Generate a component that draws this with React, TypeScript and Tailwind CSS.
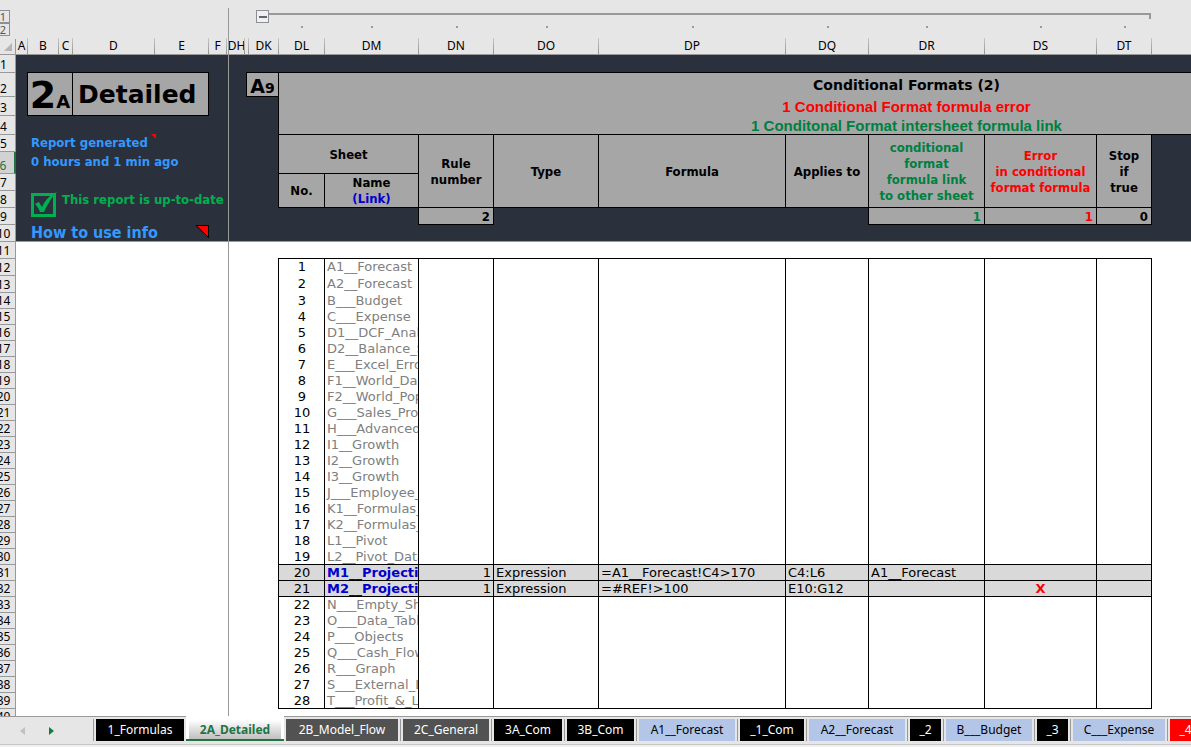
import clsx from 'clsx';

type Column = { label: string; width: string; dot?: boolean };
type SheetRow = {
  no: number;
  name: string;
  rule?: string;
  type?: string;
  formula?: string;
  appliesTo?: string;
  link?: string;
  error?: string;
};

const leftColumns: Column[] = [
  { label: 'A', width: 'w-[12px]' },
  { label: 'B', width: 'w-[31px]' },
  { label: 'C', width: 'w-[14px]' },
  { label: 'D', width: 'w-[82px]' },
  { label: 'E', width: 'w-[54px]' },
  { label: 'F', width: 'w-[18px]' },
];

const rightColumns: Column[] = [
  { label: 'DH', width: 'w-[16px]' },
  { label: '', width: 'w-[4px]' },
  { label: 'DK', width: 'w-[30px]' },
  { label: 'DL', width: 'w-[46px]', dot: true },
  { label: 'DM', width: 'w-[94px]', dot: true },
  { label: 'DN', width: 'w-[75px]', dot: true },
  { label: 'DO', width: 'w-[105px]', dot: true },
  { label: 'DP', width: 'w-[187px]', dot: true },
  { label: 'DQ', width: 'w-[83px]', dot: true },
  { label: 'DR', width: 'w-[116px]', dot: true },
  { label: 'DS', width: 'w-[112px]', dot: true },
  { label: 'DT', width: 'w-[55px]', dot: true },
];

const tableWidths = [
  'w-[47px]',
  'w-[94px]',
  'w-[75px]',
  'w-[105px]',
  'w-[187px]',
  'w-[83px]',
  'w-[116px]',
  'w-[112px]',
  'w-[55px]',
];

const names = [
  'A1__Forecast',
  'A2__Forecast',
  'B___Budget',
  'C___Expense',
  'D1__DCF_Analysis',
  'D2__Balance_Sheet',
  'E___Excel_Errors',
  'F1__World_Data',
  'F2__World_Population',
  'G___Sales_Projection',
  'H___Advanced',
  'I1__Growth',
  'I2__Growth',
  'I3__Growth',
  'J___Employee_List',
  'K1__Formulas_1',
  'K2__Formulas_2',
  'L1__Pivot',
  'L2__Pivot_Data',
  'M1__Projection',
  'M2__Projection',
  'N___Empty_Sheet',
  'O___Data_Table',
  'P___Objects',
  'Q___Cash_Flow',
  'R___Graph',
  'S___External_Links',
  'T___Profit_&_Loss',
];

const findings: Record<number, Partial<SheetRow>> = {
  20: { rule: '1', type: 'Expression', formula: '=A1__Forecast!C4>170', appliesTo: 'C4:L6', link: 'A1__Forecast' },
  21: { rule: '1', type: 'Expression', formula: '=#REF!>100', appliesTo: 'E10:G12', error: 'X' },
};

const rows: SheetRow[] = names.map((name, i) => ({ no: i + 1, name, ...findings[i + 1] }));

const tallRows: Record<number, string> = {
  1: 'h-[18px]',
  2: 'h-[24px]',
  3: 'h-[19px]',
  4: 'h-[19px]',
  6: 'h-[22px]',
};

const tabs = [
  { label: '1_Formulas', style: 'w-[88px] bg-black text-white' },
  { label: '2A_Detailed', active: true, style: '' },
  { label: '2B_Model_Flow', style: 'w-[112px] bg-[#525252] text-white' },
  { label: '2C_General', style: 'w-[86px] bg-[#525252] text-white' },
  { label: '3A_Com', style: 'w-[68px] bg-black text-white' },
  { label: '3B_Com', style: 'w-[67px] bg-black text-white' },
  { label: 'A1__Forecast', style: 'w-[96px] bg-[#b4c6e7] text-black' },
  { label: '_1_Com', style: 'w-[64px] bg-black text-white' },
  { label: 'A2__Forecast', style: 'w-[96px] bg-[#b4c6e7] text-black' },
  { label: '_2', style: 'w-[31px] bg-black text-white' },
  { label: 'B___Budget', style: 'w-[86px] bg-[#b4c6e7] text-black' },
  { label: '_3', style: 'w-[31px] bg-black text-white' },
  { label: 'C___Expense', style: 'w-[92px] bg-[#b4c6e7] text-black' },
  { label: '_4', style: 'w-[31px] bg-[#ff0000] text-white' },
];

function ColumnLabels({ columns }: { columns: Column[] }) {
  return (
    <div className="flex h-[16px]">
      {columns.map((col, i) => (
        <div key={i} className={clsx('flex shrink-0 justify-between', col.width)}>
          <span className="flex w-0 grow items-center justify-center whitespace-nowrap">{col.label}</span>
          <span className="w-px bg-linear-to-b from-[#c8c8c8] to-[#929292]" />
        </div>
      ))}
    </div>
  );
}

function OutlineBar() {
  return (
    <div className="h-[38px]">
      <div className="flex pt-[10px] pl-[27px]">
        <button aria-label="Collapse group" className="flex size-[13px] shrink-0 items-center justify-center border border-[#8c8f98] bg-[#f0f0f0]">
          <span className="h-[2px] w-[8px] bg-[#666]" />
        </button>
        <span className="mt-[3px] h-[6px] w-[882px] shrink-0 border-t-2 border-r-2 border-[#999]" />
      </div>
      <div className="flex pt-[3px]">
        {rightColumns.map((col, i) => (
          <div key={i} className={clsx('flex shrink-0 justify-center', col.width)}>
            {col.dot && <span className="size-[2px] bg-[#999]" />}
          </div>
        ))}
      </div>
    </div>
  );
}

function RowHeader({ row }: { row: number }) {
  const height = tallRows[row] ?? (row >= 14 ? 'h-[16px]' : 'h-[17px]');
  return (
    <div
      className={clsx(
        'flex shrink-0 items-end justify-center border-b border-[#999] leading-[14px]',
        height,
        row === 6 ? 'border-r-2 border-r-[#217346] bg-[#d2d2d2] text-[#217346]' : 'border-r',
      )}
    >
      {row}
    </div>
  );
}

function RowNumbers() {
  return (
    <div className="-ml-2 flex w-[24px] shrink-0 flex-col bg-[#e6e6e6]">
      <div className="flex h-[55px] shrink-0 flex-col items-end border-b border-[#999] text-[11px] leading-[11px] text-[#555]">
        <button aria-label="Outline level 1" className="mt-[10px] mr-[6px] flex h-[13px] w-[16px] items-center justify-center border border-[#8c8f98] pl-[2px]">1</button>
        <button aria-label="Outline level 2" className="mr-[6px] flex h-[13px] w-[16px] items-center justify-center border border-[#8c8f98] pl-[2px]">2</button>
        <button aria-label="Select all" className="mt-[3px] flex h-[15px] w-full items-center justify-end border-r border-[#999] pr-[3px]">
          <svg width="8" height="8" viewBox="0 0 8 8">
            <path d="M8 0v8H0z" fill="#b4b4b4" />
          </svg>
        </button>
      </div>
      {Array.from({ length: 40 }, (_, i) => (
        <RowHeader key={i} row={i + 1} />
      ))}
    </div>
  );
}

function ReportPanel() {
  return (
    <div className="h-[187px] border-b border-[#999] bg-[#2a303c] pt-[17px] font-['DejaVu_Sans_Condensed','DejaVu_Sans',sans-serif] text-[13px] font-bold [font-stretch:semi-condensed]">
      <div className="ml-[11px] flex h-[44px] w-[182px] border border-black bg-[#a6a6a6] font-['DejaVu_Sans',sans-serif] text-black [font-stretch:normal]">
        <div className="flex w-[45px] items-baseline justify-center border-r border-black text-[38px] leading-[44px]">
          2<span className="text-[18px]">A</span>
        </div>
        <h1 className="grow pl-[5px] text-[25px] leading-[44px]">Detailed</h1>
      </div>
      <div className="mt-[18px] ml-[15px] text-[#3399ff]">
        <div className="flex gap-[3px] leading-[17px]">
          Report generated
          <svg width="5" height="5" viewBox="0 0 5 5">
            <path d="M0 0h5v5z" fill="#f00" />
          </svg>
        </div>
        <p className="h-[40px] leading-[22px]">0 hours and 1 min ago</p>
        <div className="flex h-[34px] gap-[5px] text-[#00b050]">
          <svg width="26" height="26" viewBox="0 0 26 26" className="shrink-0">
            <path d="M1.5 3.5h22v21h-22z" fill="none" stroke="#00b050" strokeWidth="3" />
            <path d="M4 13l4-2 3 5C14 9 19 4 26 1c-6 6-9 12-13 20H9C8 18 6 15 4 13z" fill="#00b050" />
          </svg>
          <span className="leading-[17px] whitespace-nowrap">This report is up-to-date</span>
        </div>
        <div className="flex w-[178px] justify-between">
          <a href="#info" className="text-[16px] leading-[15px]">How to use info</a>
          <svg width="13" height="13" viewBox="0 0 13 13">
            <path d="M0 0.5h12.5v12z" fill="#f00" stroke="#000" />
          </svg>
        </div>
      </div>
    </div>
  );
}

function Cols() {
  return (
    <colgroup>
      {tableWidths.map((width, i) => (
        <col key={i} className={width} />
      ))}
    </colgroup>
  );
}

function HeaderTable() {
  const cell = 'border-r border-b border-black bg-[#a6a6a6] pt-px';
  return (
    <table className="ml-[49px] w-[874px] table-fixed border-separate border-spacing-0 text-center font-['DejaVu_Sans_Condensed','DejaVu_Sans',sans-serif] text-[13px] leading-[16px] font-bold [font-stretch:semi-condensed]">
      <Cols />
      <thead>
        <tr className="h-[39px]">
          <th colSpan={2} className={clsx(cell, 'border-l')}>Sheet</th>
          <th rowSpan={2} className={cell}>Rule<br />number</th>
          <th rowSpan={2} className={cell}>Type</th>
          <th rowSpan={2} className={cell}>Formula</th>
          <th rowSpan={2} className={cell}>Applies to</th>
          <th rowSpan={2} className={clsx(cell, 'text-[#008040]')}>conditional<br />format<br />formula link<br />to other sheet</th>
          <th rowSpan={2} className={clsx(cell, 'text-[#ff0000]')}>Error<br />in conditional<br />format formula</th>
          <th rowSpan={2} className={cell}>Stop<br />if<br />true</th>
        </tr>
        <tr className="h-[34px]">
          <th className={clsx(cell, 'border-l')}>No.</th>
          <th className={cell}>Name<br /><a href="#link" className="text-[#0000cc]">(Link)</a></th>
        </tr>
        <tr className="h-[17px] text-right leading-[15px]">
          <td />
          <td className="border-r border-black" />
          <td className={clsx(cell, 'pr-[3px]')}>2</td>
          <td colSpan={3} className="border-r border-black" />
          <td className={clsx(cell, 'pr-[3px] text-[#008040]')}>1</td>
          <td className={clsx(cell, 'pr-[3px] text-[#ff0000]')}>1</td>
          <td className={clsx(cell, 'pr-[3px]')}>0</td>
        </tr>
      </thead>
    </table>
  );
}

function SheetTable() {
  return (
    <table className="mt-[16px] ml-[49px] w-[874px] table-fixed border-separate border-spacing-0 border-t border-black font-['DejaVu_Sans',sans-serif] text-[13px] leading-[15px]">
      <Cols />
      <tbody>
        {rows.map((row) => {
          const found = Boolean(row.rule);
          const cell = clsx(
            'overflow-hidden border-r border-black align-top whitespace-nowrap',
            (found || row.no === 19 || row.no === 28) && 'border-b',
          );
          return (
            <tr key={row.no} className={clsx(row.no < 3 ? 'h-[17px]' : 'h-[16px]', found && 'bg-[#d9d9d9]')}>
              <td className={clsx(cell, 'border-l pl-px text-center')}>{row.no}</td>
              <td className={clsx(cell, 'pl-[2px] text-[#808080]')}>
                {found ? <a href={`#${row.name}`} className="font-bold text-[#0000cc]">{row.name}</a> : row.name}
              </td>
              <td className={clsx(cell, 'pr-[2px] text-right')}>{row.rule}</td>
              <td className={clsx(cell, 'pl-[2px]')}>{row.type}</td>
              <td className={clsx(cell, 'pl-[2px]')}>{row.formula}</td>
              <td className={clsx(cell, 'pl-[2px]')}>{row.appliesTo}</td>
              <td className={clsx(cell, 'pl-[2px]')}>{row.link}</td>
              <td className={clsx(cell, 'text-center font-bold text-[#ff0000]')}>{row.error}</td>
              <td className={cell} />
            </tr>
          );
        })}
      </tbody>
    </table>
  );
}

function TitleBand() {
  return (
    <div className="flex pt-[17px] pl-[17px] text-black">
      <div className="flex h-[25px] w-[32px] shrink-0 items-baseline justify-center border border-r-0 border-black bg-[#a6a6a6] font-['DejaVu_Sans',sans-serif] text-[19px] leading-[27px] font-bold">
        A<span className="text-[14px]">9</span>
      </div>
      <div className="w-[1257px] shrink-0 border border-black bg-[#a6a6a6] text-center font-['Liberation_Sans',Arial,sans-serif] text-[15px] leading-[19px] font-bold">
        <h2 className="h-[24px] font-['DejaVu_Sans',sans-serif] text-[14px] leading-[24px]">Conditional Formats (2)</h2>
        <p className="text-[#ff0000]">1 Conditional Format formula error</p>
        <p className="h-[18px] text-[#008040]">1 Conditonal Format intersheet formula link</p>
      </div>
    </div>
  );
}

function SheetTabs() {
  return (
    <div className="flex h-[31px] shrink-0 flex-col overflow-hidden bg-[#f0f0f0] text-[12px]">
      <div className="flex h-[29px] shrink-0 border-b border-[#c6c6c6] bg-[#e6e6e6]">
        <div className="flex w-[93px] shrink-0 items-center gap-[24px] border-t border-[#999] pl-[20px]">
          <button aria-label="Previous sheets">
            <svg width="5" height="8" viewBox="0 0 5 8">
              <path d="M5 0v8L0 4z" fill="#c0c0c0" />
            </svg>
          </button>
          <button aria-label="Next sheets">
            <svg width="5" height="8" viewBox="0 0 5 8">
              <path d="M0 0v8l5-4z" fill="#107c41" />
            </svg>
          </button>
        </div>
        <div role="tablist" className="flex">
          {tabs.map((tab, i) =>
            tab.active ? (
              <button key={tab.label} role="tab" aria-selected="true" className="flex h-[25px] w-[98px] shrink-0 flex-col border-b-2 border-[#217346] bg-white px-[3px] pt-[4px]">
                <span className="h-[19px] w-full bg-linear-to-b from-white to-[#bfbfbf] text-center leading-[19px] font-bold text-[#217346]">{tab.label}</span>
              </button>
            ) : (
              <div key={tab.label} className="flex h-[25px] shrink-0 border-t border-[#999] pt-[2px]">
                {i !== 2 && <span className="w-px bg-[#999]" />}
                <button role="tab" aria-selected="false" className={clsx('mx-[2px] h-[22px] shrink-0 whitespace-nowrap', tab.style)}>
                  {tab.label}
                </button>
              </div>
            ),
          )}
        </div>
      </div>
    </div>
  );
}

export default function App() {
  return (
    <div className="flex h-screen w-full flex-col overflow-hidden bg-white font-['Noto_Sans','Open_Sans',sans-serif] text-[12px] leading-[16px] text-black">
      <main className="flex min-h-0 grow overflow-hidden">
        <RowNumbers />
        <section className="w-[212px] shrink-0">
          <div className="h-[55px] border-b border-[#999] bg-[#e6e6e6] pt-[38px]">
            <ColumnLabels columns={leftColumns} />
          </div>
          <ReportPanel />
        </section>
        <div className="flex w-px shrink-0 flex-col bg-[#999]">
          <span className="h-[8px] bg-[#e6e6e6]" />
        </div>
        <section className="min-w-0 grow overflow-hidden">
          <div className="h-[55px] border-b border-[#999] bg-[#e6e6e6]">
            <OutlineBar />
            <ColumnLabels columns={rightColumns} />
          </div>
          <div className="h-[187px] border-b border-[#999] bg-[#2a303c]">
            <TitleBand />
            <HeaderTable />
          </div>
          <SheetTable />
        </section>
      </main>
      <SheetTabs />
    </div>
  );
}
